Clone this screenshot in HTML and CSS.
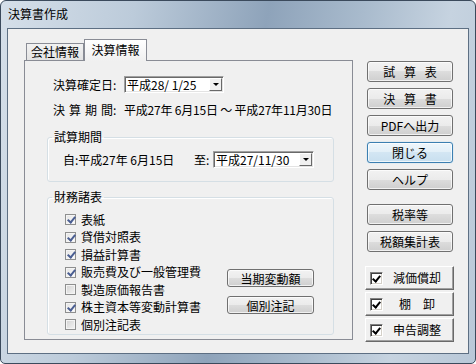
FILE: index.html
```html
<!DOCTYPE HTML>
<html>
<head>
<meta charset="UTF-8">
<title>決算書作成</title>
<link rel="stylesheet" href="styles.css">
</head>
<body>
<div class="window">
	<div class="titlebar">決算書作成</div>
	<div class="client">
		<!-- 左側：タブ -->
		<div class="tabs">
			<div class="tabstrip">
				<span class="tab">会社情報</span>
				<span class="tab active">決算情報</span>
			</div>
			<div class="panel">
				<div class="row date-row">
					<span class="field-label"><span class="jt">決算確定日</span>:</span>
					<span class="combo date-combo">
						<span class="combo-text">平成28/ 1/25</span>
						<span class="combo-btn"></span>
					</span>
				</div>
				<div class="row period-row">
					<span class="field-label"><span class="jt">決 算 期 間</span>:</span>
					<span class="period">平成27年 6月15日 ～ 平成27年11月30日</span>
				</div>

				<fieldset class="group trial">
					<legend>試算期間</legend>
					<div class="trial-row">
						<span class="from">自:平成27年 6月15日</span>
						<span class="to">至:</span>
						<span class="combo to-combo">
							<span class="combo-text">平成27/11/30</span>
							<span class="combo-btn"></span>
						</span>
					</div>
				</fieldset>

				<fieldset class="group reports">
					<legend>財務諸表</legend>
					<div class="reports-body">
						<ul class="checks">
							<li><span class="cb checked"></span>表紙</li>
							<li><span class="cb checked"></span>貸借対照表</li>
							<li><span class="cb checked"></span>損益計算書</li>
							<li><span class="cb checked"></span>販売費及び一般管理費</li>
							<li><span class="cb"></span>製造原価報告書</li>
							<li><span class="cb checked"></span>株主資本等変動計算書</li>
							<li><span class="cb"></span>個別注記表</li>
						</ul>
						<div class="side-buttons">
							<button class="btn small">当期変動額</button>
							<button class="btn small">個別注記</button>
						</div>
					</div>
				</fieldset>
			</div>
		</div>

		<!-- 右側：ボタン -->
		<div class="actions">
			<button class="btn spaced">試 算 表</button>
			<button class="btn spaced">決 算 書</button>
			<button class="btn">PDFへ出力</button>
			<button class="btn default">閉じる</button>
			<button class="btn">ヘルプ</button>
			<button class="btn sep">税率等</button>
			<button class="btn">税額集計表</button>
			<div class="cbtn sep"><span class="ccb"></span><span class="ctext">減価償却</span></div>
			<div class="cbtn"><span class="ccb"></span><span class="ctext">棚　卸</span></div>
			<div class="cbtn"><span class="ccb"></span><span class="ctext">申告調整</span></div>
		</div>
	</div>
</div>
</body>
</html>
```

FILE: styles.css
```css
*{
	margin:0;
	padding:0;
	box-sizing:border-box;
}
body{
	font:12px/1 "Noto Sans CJK JP", "Noto Sans", sans-serif;
	color:#000;
	background:#fff;
}
/*ウィンドウ枠*/
.window{
	width:476px;
	height:364px;
	display:flex;
	flex-direction:column;
	border:1px solid #3b4a5c;
	border-radius:6px 6px 5px 5px;
	padding:0 6px 9px 6px;
	background:linear-gradient(100deg, #d5dfe9 0%, #bccbda 25%, #8ea3ba 50%, #a9bbcd 68%, #c6d3e0 84%, #b9c8d8 100%);
}
.titlebar{
	height:27px;
	line-height:26px;
	padding-left:1px;
	color:#000;
}
.client{
	flex:1;
	display:flex;
	gap:12px;
	padding:10px 14px 13px 16px;
	background:#f0f0f0;
	border:1px solid #5d6f83;
}
/*タブ*/
.tabs{
	width:329px;
	display:flex;
	flex-direction:column;
}
.tabstrip{
	height:21px;
	display:flex;
	align-items:flex-end;
	padding-left:2px;
}
.tab{
	width:58px;
	height:17px;
	line-height:16px;
	text-align:center;
	border:1px solid #898c95;
	border-bottom:none;
	background:linear-gradient(#f2f2f2, #e3e3e3);
}
.tab.active{
	width:63px;
	height:22px;
	line-height:20px;
	margin-bottom:-1px;
	position:relative;
	z-index:1;
	background:linear-gradient(#ffffff, #f0f0f0);
}
.panel{
	flex:1;
	border:1px solid #898c95;
	background:#f0f0f0;
	padding:15px 18px 0 22px;
}
.row{
	display:flex;
	align-items:center;
	padding-left:6px;
	white-space:nowrap;
}
.date-row{
	height:17px;
}
.period-row{
	margin-top:8px;
	height:18px;
}
.period{
	white-space:pre;
	letter-spacing:-0.2px;
}
.field-label{
	display:inline-block;
	width:71px;
	flex:none;
	white-space:nowrap;
}
.jt{
	display:inline-block;
	width:60px;
	text-align:justify;
	text-align-last:justify;
}
/*コンボボックス*/
.combo{
	display:flex;
	align-items:center;
	height:17px;
	background:#fff;
	border:1px solid;
	border-color:#a0a0a0 #fff #fff #a0a0a0;
	box-shadow:inset 1px 1px 0 #696969, inset -1px -1px 0 #e3e3e3;
	padding:1px 1px 1px 2px;
}
.date-combo{
	width:100px;
}
.to-combo{
	width:101px;
}
.combo-text{
	flex:1;
	white-space:pre;
	line-height:13px;
}
.combo-btn{
	width:13px;
	height:13px;
	background:#f0f0f0;
	border:1px solid;
	border-color:#fff #696969 #696969 #fff;
	position:relative;
}
.combo-btn::after{
	content:"";
	position:absolute;
	left:3px;
	top:4px;
	border-left:3px solid transparent;
	border-right:3px solid transparent;
	border-top:3px solid #000;
}
/*グループボックス*/
.group{
	border:1px solid #d5dfe5;
	border-radius:3px;
	box-shadow:inset 1px 1px 0 #fff;
	padding:0;
}
.group legend{
	margin-left:4px;
	padding:0 2px;
	line-height:14px;
}
.trial{
	margin-top:11px;
}
.trial-row{
	display:flex;
	align-items:center;
	height:17px;
	margin:7px 0 13px 15px;
}
.from{
	width:131px;
	white-space:pre;
}
.to{
	width:19px;
}
.reports{
	margin-top:8px;
}
.reports-body{
	display:flex;
	padding:7px 0 0 17px;
}
.checks{
	list-style:none;
	width:162px;
}
.checks li{
	height:17.5px;
	display:flex;
	align-items:center;
	white-space:nowrap;
}
.cb{
	width:11px;
	height:11px;
	margin-right:5px;
	border:1px solid #8e8f8f;
	background:linear-gradient(135deg, #d2d2d2, #f4f4f4);
	box-shadow:inset 0 0 0 1px #f4f4f4;
	position:relative;
}
.cb.checked{
	background:linear-gradient(135deg, #e2e2e2, #ffffff);
}
.cb.checked::after{
	content:"";
	position:absolute;
	left:3px;
	top:0px;
	width:3px;
	height:6px;
	border-right:2px solid #4a5e92;
	border-bottom:2px solid #4a5e92;
	transform:rotate(40deg);
}
.side-buttons{
	display:flex;
	flex-direction:column;
	gap:9px;
	padding-top:58px;
}
/*ボタン (Win7)*/
.btn{
	font:inherit;
	color:#000;
	height:21px;
	width:86px;
	margin:0 1px 0 2px;
	border:1px solid #707070;
	border-radius:3px;
	background:linear-gradient(#f2f2f2 0%, #ebebeb 50%, #dddddd 50%, #cfcfcf 100%);
	box-shadow:inset 0 0 0 1px rgba(255,255,255,0.7);
	white-space:pre;
	line-height:18px;
}
.btn.spaced{
	word-spacing:6px;
}
.btn.small{
	height:18px;
	width:87px;
	margin:0;
	line-height:15px;
}
.btn.default{
	border-color:#3c7fb1;
	background:linear-gradient(#eef6fb 0%, #e2eff8 50%, #d3e6f3 50%, #c8dfef 100%);
	box-shadow:inset 0 0 0 1px rgba(255,255,255,0.7), 0 0 1px #7fc3ea;
}
.actions{
	width:89px;
	display:flex;
	flex-direction:column;
	gap:6px;
	margin-top:22px;
}
.actions .sep{
	margin-top:8px;
}
/*チェック付きボタン (クラシック)*/
.cbtn{
	height:24px;
	display:flex;
	align-items:center;
	padding-left:4px;
	background:#f0f0f0;
	border:1px solid;
	border-color:#fff #696969 #696969 #fff;
	box-shadow:inset -1px -1px 0 #a0a0a0;
	margin-bottom:-4px;
}
.ccb{
	width:13px;
	height:13px;
	background:#fff;
	border:1px solid;
	border-color:#808080 #fff #fff #808080;
	box-shadow:inset 1px 1px 0 #404040, inset -1px -1px 0 #d4d0c8;
	position:relative;
}
.ccb::after{
	content:"";
	position:absolute;
	left:3px;
	top:1px;
	width:3px;
	height:6px;
	border-right:2px solid #000;
	border-bottom:2px solid #000;
	transform:rotate(40deg);
}
.ctext{
	width:48px;
	margin-left:10px;
	text-align:center;
	white-space:pre;
}
```
